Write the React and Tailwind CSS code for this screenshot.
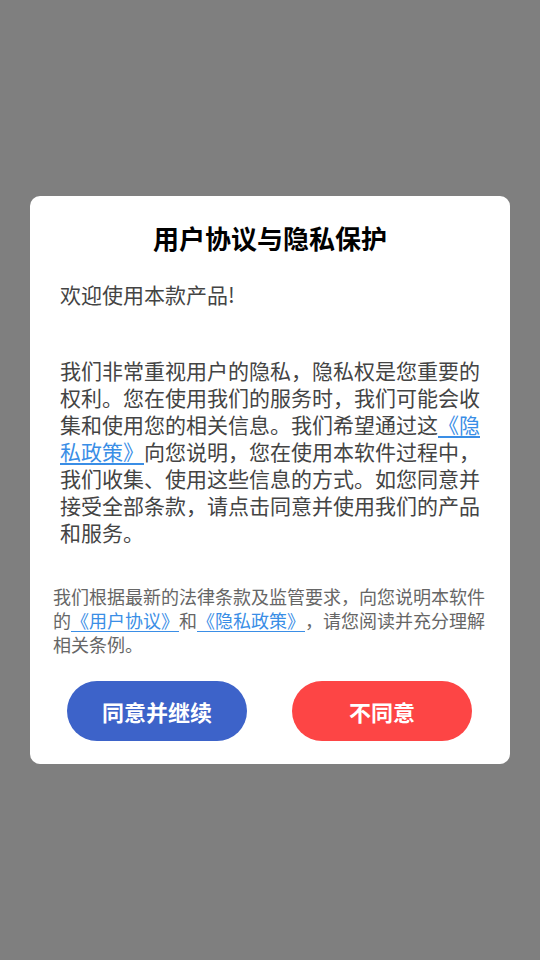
export default function App() {
  const font = { fontFamily: '"Noto Sans CJK SC", "Noto Sans", sans-serif' };
  return (
    <div className="w-full h-[960px] bg-[#7f7f7f] flex items-center justify-center px-[30px] [text-spacing-trim:space-all]" style={font}>
      <div className="w-[480px] bg-white rounded-[10px] pt-[25px] pb-[23px]">
        <h1 className="text-center text-[26px] leading-[34px] font-bold text-black">用户协议与隐私保护</h1>
        <p className="mt-[26px] px-[30px] text-[21px] leading-[27px] text-[#444]">欢迎使用本款产品!</p>
        <p className="mt-[49px] px-[30px] text-[21px] leading-[27px] text-[#444]">
          我们非常重视用户的隐私，隐私权是您重要的权利。您在使用我们的服务时，我们可能会收集和使用您的相关信息。我们希望通过这
          <span className="text-[#3a8ee6] underline underline-offset-[3px]">《隐私政策》</span>
          向您说明，您在使用本软件过程中，我们收集、使用这些信息的方式。如您同意并接受全部条款，请点击同意并使用我们的产品和服务。
        </p>
        <p className="mt-[38px] px-[23px] text-[18px] leading-[24px] text-[#666]">
          我们根据最新的法律条款及监管要求，向您说明本软件的
          <span className="text-[#3a8ee6] underline underline-offset-[3px]">《用户协议》</span>
          和
          <span className="text-[#3a8ee6] underline underline-offset-[3px]">《隐私政策》</span>
          ，请您阅读并充分理解相关条例。
        </p>
        <div className="mt-[25px] pl-[37px] pr-[38px] flex justify-between">
          <button className="w-[180px] h-[60px] rounded-full bg-[#3d63c9] text-white text-[22px] font-bold">同意并继续</button>
          <button className="w-[180px] h-[60px] rounded-full bg-[#fd4545] text-white text-[22px] font-bold">不同意</button>
        </div>
      </div>
    </div>
  );
}
